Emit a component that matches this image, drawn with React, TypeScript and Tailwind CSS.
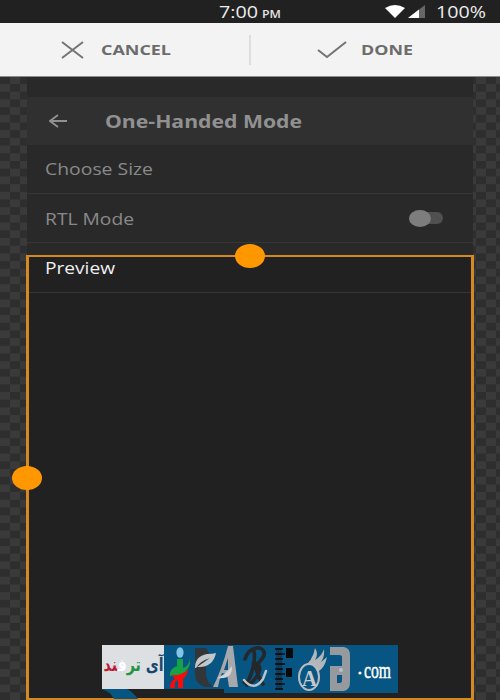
import React from "react";

const font = "font-['Open_Sans','Noto_Sans',sans-serif]";

type LabelProps = { text: string; width: number; size: number; weight?: number; fill: string; y: number; h: number };

function Label({ text, width, size, weight = 400, fill, y, h }: LabelProps) {
  return (
    <svg width={width + 4} height={h} className="block shrink-0 overflow-visible">
      <text x="0" y={y} fontSize={size} fontWeight={weight} fill={fill} textLength={width} lengthAdjust="spacingAndGlyphs">
        {text}
      </text>
    </svg>
  );
}

function Checker() {
  return (
    <svg className="absolute inset-0 h-full w-full">
      <defs>
        <pattern id="checkerLeft" y="7" width="20" height="15.4" patternUnits="userSpaceOnUse">
          <rect width="20" height="15.4" fill="#2e2e2e" />
          <rect width="10" height="7.7" fill="#3a3a3a" />
          <rect x="10" y="7.7" width="10" height="7.7" fill="#3a3a3a" />
        </pattern>
        <pattern id="checkerRight" x="6" y="7" width="20" height="15.4" patternUnits="userSpaceOnUse">
          <rect width="20" height="15.4" fill="#2e2e2e" />
          <rect width="10" height="7.7" fill="#3a3a3a" />
          <rect x="10" y="7.7" width="10" height="7.7" fill="#3a3a3a" />
        </pattern>
      </defs>
      <rect width="250" height="100%" fill="url(#checkerLeft)" />
      <rect x="250" width="250" height="100%" fill="url(#checkerRight)" />
    </svg>
  );
}

function Watermark() {
  return (
    <svg width="310" height="60" viewBox="95 640 310 60" className="block">
      <path d="M101 689h26q6 3 11 10h-24q-4-8-13-10z" fill="#075582" />
      <path d="M102 645h296v48h-174v-4H102z" fill="#075582" />
      <rect x="102" y="645" width="62" height="44" fill="#dde0e3" />
      <text x="163.500" y="671" textLength="60" lengthAdjust="spacingAndGlyphs" fontFamily="'DejaVu Sans', sans-serif" fontWeight="700" fontSize="18" direction="rtl">
        <tspan fill="#17476f">آی </tspan>
        <tspan fill="#259342">تر</tspan>
        <tspan fill="#ffffff">ف</tspan>
        <tspan fill="#bb1d36">ند</tspan>
      </text>
      <ellipse cx="180" cy="652.5" rx="3.6" ry="5.2" fill="#82c5e8" />
      <path d="M177 659h6v9q6-2 7-10 1 12-9 17l-11 1q-1-7 7-10z" fill="#16a249" />
      <path d="M171 674q4 3 12-1l5-3q-1 6-5 9v9h-5v-8q-4 1-3 8h-5q0-7 5-9z" fill="#fa0b0b" />
      <path d="M195 648h11l3 5-3 3v19q1 7 7 12h-8q-10-3-10-13z" fill="#333638" />
      <path d="M195 668q0-12 12-14 6 0 9-1-3 14-17 14h-2l13-9q-10 3-14 10z" fill="#c4c7c9" />
      <path d="M228 646h5l5 41h-9l-2-13-5-1q-3 7-4 14h-5q9-18 15-41m0 12-4 12h4z" fill="#a6a8ab" />
      <path d="M217 678q8-3 15-12 1 14-15 12z" fill="#d1d4d6" />
      <g fill="none" strokeLinecap="round">
        <path d="M245 659q4-12 15-11 8 4 1 12-3 5-9 4 10-1 7 8-4 10-12 13M254 651q2 13-5 28-3 6-5 3M255 665q3 12 8 19" stroke="#24282b" strokeWidth="3.6" />
        <path d="M244 680q10 12 19-1l3-8" stroke="#b9c4cb" strokeWidth="2.5" />
      </g>
      <path d="M276 648h6v42h-6z" fill="#123b57" />
      <path d="M275 649h8m-8 5h10m-10 5h8m-8 5h10m-10 5h8m-8 5h10m-10 5h8m-8 5h10m-10 5h8" stroke="#05090c" strokeWidth="1.5" />
      <path d="M286 648h7v10h-7zM286 668h6v9h-6z" fill="#07090c" />
      <path d="M302 668q11-7 13-20 4 6 0 12 7-4 9-11 1 7-3 13l6-5q-2 10-8 14l-2 10q-4-11-15-13z" fill="#b3b7ba" />
      <ellipse cx="309" cy="677" rx="10" ry="13" fill="#075582" stroke="#b9bcbf" strokeWidth="2" />
      <text x="302" y="686" fontFamily="Liberation Serif, serif" fontSize="24" fontWeight="700" fill="#c7c9cb" textLength="15" lengthAdjust="spacingAndGlyphs">A</text>
      <path fillRule="evenodd" d="M330 647h14q6 1 6 8v27q0 8-6 9h-14v-25h12v-9q0-2-3-2h-9zM337 675v8h3q2 0 2-3v-5z" fill="#96999d" />
      <circle cx="341" cy="670" r="2" fill="#b8c0c6" />
      <circle cx="360" cy="673" r="1.6" fill="#fff" />
      <text x="364" y="678" fontFamily="Liberation Serif, serif" fontSize="24" fill="#fff" stroke="#fff" strokeWidth="0.5" textLength="27" lengthAdjust="spacingAndGlyphs">com</text>
    </svg>
  );
}

export default function App() {
  return (
    <div className={`${font} relative flex h-[700px] w-[500px] flex-col overflow-hidden bg-[#303030]`}>
      <div className="flex h-[23px] shrink-0 bg-[#212121] pl-[219px]">
        <Label text="7:00" width={39} size={15.5} weight={500} fill="#eeeeee" y={18} h={23} />
        <Label text="PM" width={19} size={10.5} weight={600} fill="#e4e4e4" y={18} h={23} />
        <svg width="42" height="23" viewBox="384 0 42 23" className="ml-[99px] block shrink-0">
          <path d="M385 8q10-6 20 0l-10 10z" fill="#fff" />
          <path d="M425 5v13h-17z" fill="#666" />
          <path d="M419 9.6v8.4h-11z" fill="#fff" />
        </svg>
        <div className="ml-[10px]">
          <Label text="100%" width={50} size={15.5} weight={500} fill="#eeeeee" y={18} h={23} />
        </div>
      </div>
      <div className="flex h-[54px] shrink-0 items-center border-b border-[#8b8b8b] bg-[#f3f3f3]">
        <div className="flex h-full w-[249px] items-center pl-[61px]">
          <svg width="23" height="18" viewBox="0 0 23 18" className="mr-[17px]"><path d="m1 1 21 16M22 1 1 17" stroke="#747474" strokeWidth="2" /></svg>
          <Label text="CANCEL" width={70} size={14.5} weight={700} fill="#6c6c6c" y={14} h={18} />
        </div>
        <div className="h-[30px] w-[2px] bg-[#dedede]" />
        <div className="flex h-full flex-1 items-center pl-[66px]">
          <svg width="30" height="18" viewBox="0 0 30 18" className="mr-[14px]"><path d="m1 9 9 7L29 1" fill="none" stroke="#747474" strokeWidth="2" /></svg>
          <Label text="DONE" width={52} size={14.5} weight={700} fill="#6c6c6c" y={14} h={18} />
        </div>
      </div>
      <div className="relative h-[623px]">
        <Checker />
        <div className="relative ml-[27px] flex h-full w-[446px] flex-col bg-[#292929]">
          <div className="mt-5 flex h-[48px] shrink-0 items-center bg-[#303030] pl-[22px]">
            <svg width="18" height="14" viewBox="0 0 18 14" className="mr-[38px]"><path d="M9 1 1 7l8 6M1 7h17" fill="none" stroke="#909090" strokeWidth="1.9" /></svg>
            <Label text="One-Handed Mode" width={197} size={18} weight={700} fill="#919191" y={17.5} h={22} />
          </div>
          <div className="flex h-[49px] shrink-0 items-center border-b border-[#363636] pl-[18px]">
            <Label text="Choose Size" width={108} size={16.3} fill="#898989" y={17} h={22} />
          </div>
          <div className="flex h-[49px] shrink-0 items-center border-b border-[#363636] pl-[18px]">
            <Label text="RTL Mode" width={89} size={16.3} fill="#898989" y={17.5} h={22} />
            <div className="ml-auto mr-[30px] flex h-[12px] w-[34px] items-center rounded-full bg-[#505050]">
              <div className="h-[17px] w-[22px] shrink-0 rounded-[50%] bg-[#7d7d7d]" />
            </div>
          </div>
        </div>
        <div className="absolute left-[26px] top-[178px] h-[445px] w-[448px] border-x-[3px] border-y-2 border-[#d58a21] bg-[#212121]">
          <div className="flex h-[36px] items-center border-b border-[#363636] pl-[16px]">
            <div className="-mt-[13px]"><Label text="Preview" width={70} size={16.3} weight={500} fill="#f0f0f0" y={16.5} h={22} /></div>
          </div>
        </div>
        <div className="absolute left-[235px] top-[167px] h-[24px] w-[30px] rounded-[50%] bg-[#ff9800]" />
        <div className="absolute left-[12px] top-[389px] h-[24px] w-[30px] rounded-[50%] bg-[#ff9800]" />
      </div>
      <div className="absolute left-[95px] top-[640px]"><Watermark /></div>
    </div>
  );
}
